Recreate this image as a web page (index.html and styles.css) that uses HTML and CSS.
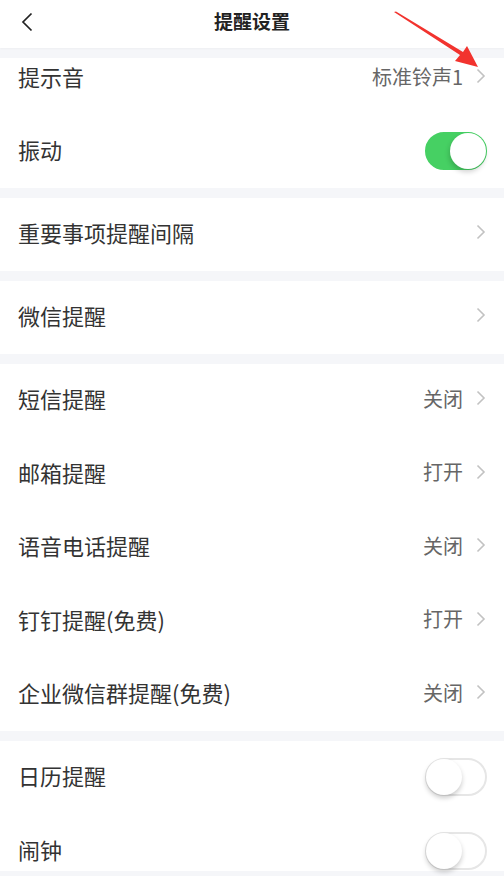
FILE: index.html
```html
<!DOCTYPE html>
<html lang="zh-CN">
<head>
   <meta charset="UTF-8">
   <title>提醒设置</title>
   <meta name="viewport" content="width=device-width, initial-scale=1.0">
   <link rel="stylesheet" href="styles.css">
</head>
<body>
   <div class="page">
      <div class="topbar">
         <svg class="back" width="12" height="20" viewBox="0 0 12 20"><polyline points="10.5,1.5 2,10 10.5,18.5" fill="none" stroke="#222" stroke-width="1.7"/></svg>
         <div class="title">提醒设置</div>
      </div>

      <div class="group">
         <div class="row row-first">
            <span class="label">提示音</span>
            <span class="value">标准铃声1</span>
            <svg class="more" width="10" height="16" viewBox="0 0 10 16"><polyline points="1.5,1.5 8,8 1.5,14.5" fill="none" stroke="#c2c2c2" stroke-width="1.6"/></svg>
         </div>
         <div class="row">
            <span class="label">振动</span>
            <span class="switch on"><span class="knob"></span></span>
         </div>
      </div>

      <div class="group">
         <div class="row">
            <span class="label">重要事项提醒间隔</span>
            <svg class="more" width="10" height="16" viewBox="0 0 10 16"><polyline points="1.5,1.5 8,8 1.5,14.5" fill="none" stroke="#c2c2c2" stroke-width="1.6"/></svg>
         </div>
      </div>

      <div class="group">
         <div class="row">
            <span class="label">微信提醒</span>
            <svg class="more" width="10" height="16" viewBox="0 0 10 16"><polyline points="1.5,1.5 8,8 1.5,14.5" fill="none" stroke="#c2c2c2" stroke-width="1.6"/></svg>
         </div>
      </div>

      <div class="group">
         <div class="row">
            <span class="label">短信提醒</span>
            <span class="value">关闭</span>
            <svg class="more" width="10" height="16" viewBox="0 0 10 16"><polyline points="1.5,1.5 8,8 1.5,14.5" fill="none" stroke="#c2c2c2" stroke-width="1.6"/></svg>
         </div>
         <div class="row">
            <span class="label">邮箱提醒</span>
            <span class="value">打开</span>
            <svg class="more" width="10" height="16" viewBox="0 0 10 16"><polyline points="1.5,1.5 8,8 1.5,14.5" fill="none" stroke="#c2c2c2" stroke-width="1.6"/></svg>
         </div>
         <div class="row">
            <span class="label">语音电话提醒</span>
            <span class="value">关闭</span>
            <svg class="more" width="10" height="16" viewBox="0 0 10 16"><polyline points="1.5,1.5 8,8 1.5,14.5" fill="none" stroke="#c2c2c2" stroke-width="1.6"/></svg>
         </div>
         <div class="row">
            <span class="label">钉钉提醒(免费)</span>
            <span class="value">打开</span>
            <svg class="more" width="10" height="16" viewBox="0 0 10 16"><polyline points="1.5,1.5 8,8 1.5,14.5" fill="none" stroke="#c2c2c2" stroke-width="1.6"/></svg>
         </div>
         <div class="row">
            <span class="label">企业微信群提醒(免费)</span>
            <span class="value">关闭</span>
            <svg class="more" width="10" height="16" viewBox="0 0 10 16"><polyline points="1.5,1.5 8,8 1.5,14.5" fill="none" stroke="#c2c2c2" stroke-width="1.6"/></svg>
         </div>
      </div>

      <div class="group">
         <div class="row">
            <span class="label">日历提醒</span>
            <span class="switch"><span class="knob"></span></span>
         </div>
         <div class="row row-last">
            <span class="label">闹钟</span>
            <span class="switch"><span class="knob"></span></span>
         </div>
      </div>

      <!-- red pointer drawn over the screenshot -->
      <svg class="pointer" width="504" height="80" viewBox="0 0 504 80">
         <polygon points="394,12 396,11.5 463,52 467,46 478,67 455,61 460,55" fill="#f2332e"/>
      </svg>
   </div>
</body>
</html>
```

FILE: styles.css
```css
body {
   margin: 0;
   background-color: #f5f6f9;
   font-family: "Noto Sans CJK SC", "Noto Sans", sans-serif;
   overflow: hidden;
}
.page {
   position: relative;
   width: 504px;
   height: 876px;
   display: flex;
   flex-direction: column;
   gap: 9.5px;
}
.topbar {
   position: relative;
   height: 48px;
   background-color: #fff;
   display: flex;
   align-items: center;
   justify-content: center;
   box-shadow: 0 1px 2px rgba(0, 0, 0, 0.03);
}
.topbar .back {
   position: absolute;
   left: 21px;
   top: 12px;
}
.title {
   font-size: 19px;
   font-weight: bold;
   color: #222;
   margin-top: -8px;
}
.group {
   background-color: #fff;
}
.row {
   height: 73.5px;
   display: flex;
   align-items: center;
   padding: 0 18px 4px;
   box-sizing: border-box;
}
.row-first {
   height: 57px;
   padding-bottom: 20px;
}
.row-last {
   height: 57px;
   padding-top: 12px;
   padding-bottom: 0;
}
.label {
   flex: 1;
   font-size: 22px;
   color: #333;
}
.value {
   font-size: 20px;
   color: #666;
   margin-right: 13px;
}
.switch {
   position: relative;
   width: 62px;
   height: 38px;
   border-radius: 19px;
   border: 2px solid #e6e6e6;
   box-sizing: border-box;
   background-color: #fff;
   margin-right: -1px;
   margin-bottom: -4px;
}
.switch .knob {
   position: absolute;
   left: -1px;
   top: -1px;
   width: 36px;
   height: 36px;
   border-radius: 50%;
   background-color: #fff;
   box-shadow: 0 3px 5px rgba(0, 0, 0, 0.2);
}
.switch.on {
   background-color: #46d063;
   border-color: #46d063;
}
.switch.on .knob {
   left: auto;
   right: -1px;
   box-shadow: -1px 3px 5px rgba(0, 0, 0, 0.18);
}
.pointer {
   position: absolute;
   left: 0;
   top: 0;
}
```
